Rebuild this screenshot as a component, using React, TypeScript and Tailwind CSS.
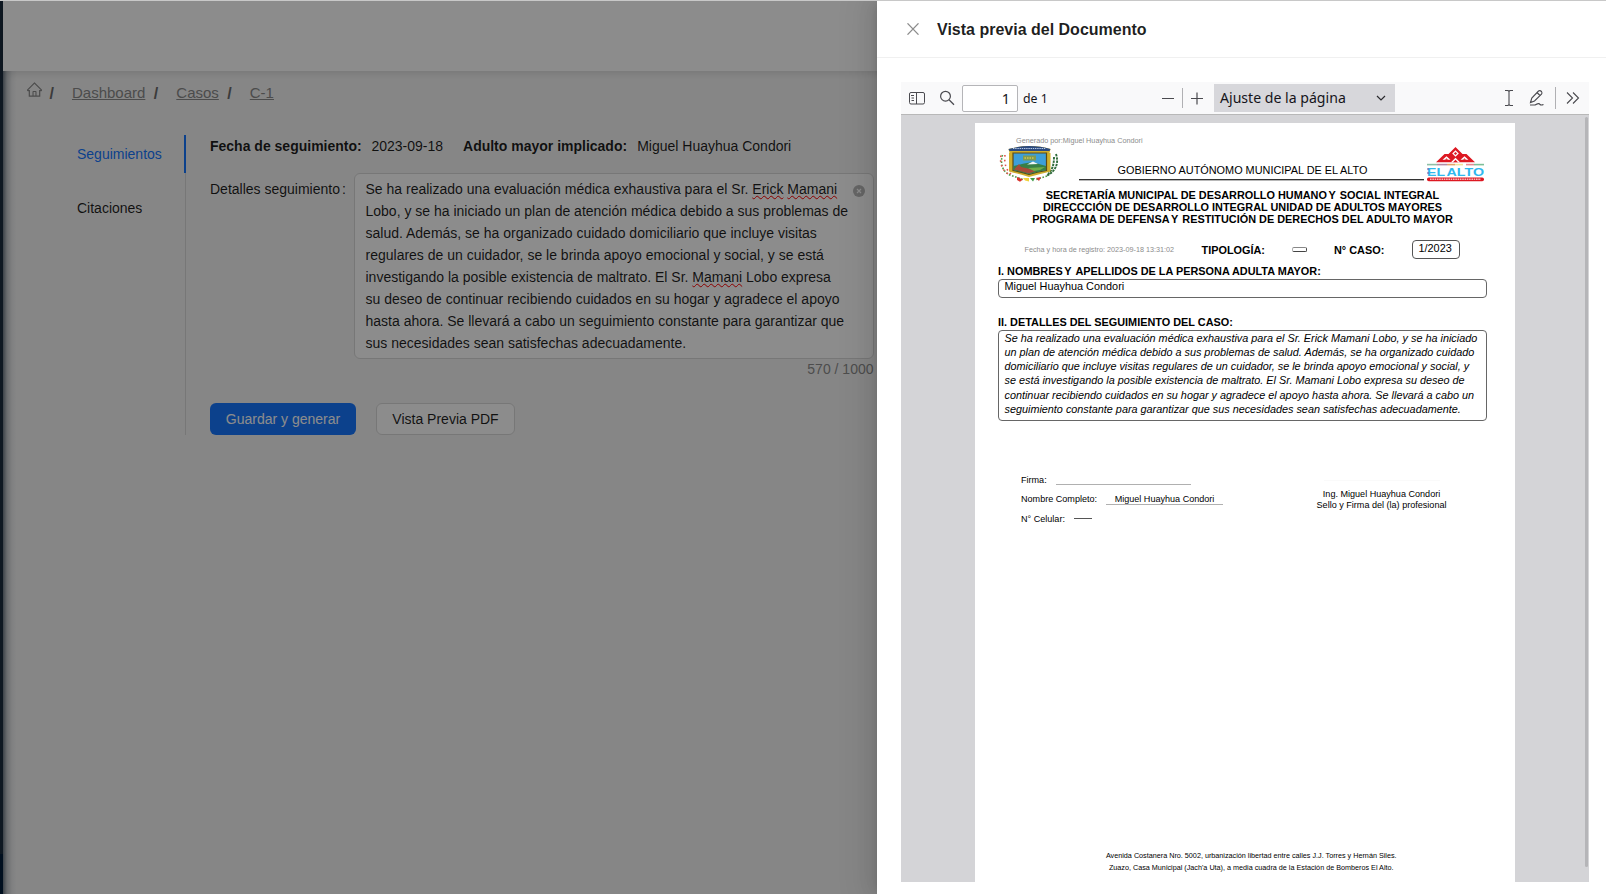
import React from 'react';

const details = [
  [['Se ha realizado una evaluación médica exhaustiva para el Sr. ', false], ['Erick', true], [' ', false], ['Mamani', true]],
  [['Lobo, y se ha iniciado un plan de atención médica debido a sus problemas de', false]],
  [['salud. Además, se ha organizado cuidado domiciliario que incluye visitas', false]],
  [['regulares de un cuidador, se le brinda apoyo emocional y social, y se está', false]],
  [['investigando la posible existencia de maltrato. El Sr. ', false], ['Mamani', true], [' Lobo expresa', false]],
  [['su deseo de continuar recibiendo cuidados en su hogar y agradece el apoyo', false]],
  [['hasta ahora. Se llevará a cabo un seguimiento constante para garantizar que', false]],
  [['sus necesidades sean satisfechas adecuadamente.', false]],
] as [string, boolean][][];

const pdfDetails = [
  'Se ha realizado una evaluación médica exhaustiva para el Sr. Erick Mamani Lobo, y se ha iniciado',
  'un plan de atención médica debido a sus problemas de salud. Además, se ha organizado cuidado',
  'domiciliario que incluye visitas regulares de un cuidador, se le brinda apoyo emocional y social, y',
  'se está investigando la posible existencia de maltrato. El Sr. Mamani Lobo expresa su deseo de',
  'continuar recibiendo cuidados en su hogar y agradece el apoyo hasta ahora. Se llevará a cabo un',
  'seguimiento constante para garantizar que sus necesidades sean satisfechas adecuadamente.',
];

function HomeIcon() {
  return (
    <svg viewBox="64 64 896 896" className="mt-[-7px] size-[15px] shrink-0" fill="currentColor">
      <path d="M946.5 505L560.1 118.8l-25.9-25.9a31.5 31.5 0 00-44.4 0L77.5 505a63.9 63.9 0 00-18.8 46c.4 35.2 29.7 63.3 64.9 63.3h42.5V940h691.8V614.3h43.4c17.1 0 33.2-6.7 45.3-18.8a63.6 63.6 0 0018.7-45.3c0-17-6.7-33.1-18.8-45.2zM568 868H456V664h112v204zm217.9-325.7V868H632V640c0-22.100-17.900-40-40-40H432c-22.100 0-40 17.900-40 40v228H238.100V542.300h-96l370-369.700 23.100 23.100L882 542.300h-96.100z" />
    </svg>
  );
}

function Crest() {
  return (
    <svg viewBox="0 0 60 36" className="h-[36px] w-[60px]">
      <g fill="none" stroke="#4f9a48" strokeWidth="1.600" strokeDasharray="1.600 1.600">
        <path d="M3.500 9C1 17 3 26 12 29.500L24 33.500" />
        <path d="M48 30L37 33.500" />
      </g>
      <g fill="none" stroke="#2f6b3a" strokeWidth="1.900" strokeDasharray="2.400 0.900">
        <path d="M57 8C60 17 57 25 48 29.500" />
        <path d="M55 11C55 18 53.500 24 49 28" />
      </g>
      <g fill="none" stroke="#e0554a" strokeWidth="1.600" strokeDasharray="1.600 3.200">
        <path d="M2 9.500C0.500 17 3 25 11 29" />
        <path d="M6 9C5 17 7 24 12 28" />
      </g>
      <path d="M18 31L24 33.500 21 35.800 18 34z" fill="#d8332b" />
      <path d="M24 32H30V35.500L26 34.500z" fill="#f0d13b" />
      <path d="M31 32H36L34 35.500z" fill="#3f9a46" />
      <path d="M37 32L42 31 40 35z" fill="#d8332b" />
      <path d="M9.500 3Q20 0 30 0Q42 0 51.500 3L50.500 7H51.500V25.500Q41 28 30 31Q20 28 10 25.500V7H10.500z" fill="#cfae2c" />
      <path d="M9.500 3Q20 0 30 0Q42 0 51.500 3L50.500 5H10.500z" fill="#2b4a80" />
      <path d="M14 2.500H47" stroke="#b9cbe4" strokeWidth="1.100" strokeDasharray="1.400 0.800" />
      <path d="M14 7H47.500V24.500Q38 26 30 28.500Q22 26 14 24.500z" fill="#3d9fd9" stroke="#5b4a18" strokeWidth="1.200" />
      <path d="M24 9.500H37V14.500H24z" fill="#7f9a52" />
      <path d="M25.500 12H35.500" stroke="#d8c84b" strokeWidth="1.500" strokeDasharray="1.500 1" />
      <path d="M14.500 20L25 17.500 34 16 40 18 47 20V24Q38 26 30 28Q22 26 14.500 24z" fill="#377f46" />
      <path d="M28 18.500L34 15.500 39 18z" fill="#eef6fb" />
      <path d="M15 23.500L20 18 22 21 29 22.500 37 25 30 27.500z" fill="#a84b39" />
      <path d="M29 22L46 21 41 24 35 25z" fill="#6fae4a" />
    </svg>
  );
}

function ElAltoLogo() {
  return (
    <svg viewBox="0 0 57 35" className="h-[35px] w-[57px]">
      <path d="M9 15.200L17.500 7H21.500L28.500 0 35.500 7H39.500L48 15.200z" fill="#dd1822" />
      <path d="M28.500 3.200l3.300 3.300-3.300 3.300-3.300-3.300z" fill="#fff" />
      <path d="M28.500 4.900l1.600 1.600-1.600 1.600-1.600-1.600z" fill="#dd1822" />
      <path d="M15.500 12.800L19.500 9.300 23.500 12.800zM33.500 12.800L37.500 9.300 41.500 12.800z" fill="#fff" />
      <path d="M18 12.800l1.500-1.600L21 12.800zM36 12.800l1.500-1.600L39 12.800z" fill="#dd1822" />
      <path d="M24 15.200L28.500 10.800 33 15.200z" fill="#fff" />
      <path d="M26 15.200L28.500 12.700 31 15.200z" fill="#dd1822" />
      <g strokeWidth="1.600">
        <path d="M0 17.600H10" stroke="#8fbfa6" />
        <path d="M10 17.600H20" stroke="#b58aa6" />
        <path d="M20 17.600H28" stroke="#e3a36b" />
        <path d="M28 17.600H36" stroke="#f1e39a" />
        <path d="M39 17.600H47" stroke="#e58a94" />
        <path d="M47 17.600H57" stroke="#7fbf98" />
      </g>
      <g fontSize="11.300" fontWeight="700" fill="#2fb8ee" className="font-['Liberation_Sans',sans-serif]">
        <text x="0" y="28.700" textLength="18" lengthAdjust="spacingAndGlyphs">EL</text>
        <text x="19.500" y="28.700" textLength="37.500" lengthAdjust="spacingAndGlyphs">ALTO</text>
      </g>
      <path d="M1 21v2M1 25v2" stroke="#6b4fa0" strokeWidth="1" />
      <rect x="0" y="30.400" width="57" height="3.800" rx="1.800" fill="#dd1822" />
      <path d="M3 32.300H54" stroke="#f6b7ba" strokeWidth="1.400" strokeDasharray="1.600 0.700" />
    </svg>
  );
}

function Background() {
  return (
    <div className="flex h-full w-full pt-px">
      <div className="flex w-[3px] shrink-0 flex-col">
        <div className="flex-1 bg-[#1b2c3e]" />
        <div className="h-10 bg-[#001d3a]" />
      </div>
      <div className="flex min-w-0 flex-1 flex-col">
        <div className="z-10 h-[70px] shrink-0 bg-white shadow-[0_2px_8px_rgba(0,0,0,0.12)]" />
        <main className="flex-1 bg-[#f5f5f5] bg-[linear-gradient(to_right,rgba(0,21,41,0.55)_0px,rgba(0,21,41,0.22)_4px,rgba(0,21,41,0.05)_9px,transparent_14px)]">
          <nav className="flex h-[44px] items-center pl-[23.500px] text-[15px] text-[#8a8a8a]">
            <HomeIcon />
            <b className="ml-[8px] mt-px text-[16px] text-[#6c6c6c]">/</b>
            <a className="ml-[18px] underline">Dashboard</a>
            <b className="ml-[8.500px] mt-px text-[16px] text-[#6c6c6c]">/</b>
            <a className="ml-[18px] underline">Casos</a>
            <b className="ml-[8.500px] mt-px text-[16px] text-[#6c6c6c]">/</b>
            <a className="ml-[18px] underline">C-1</a>
          </nav>
          <div className="mt-[20px] flex h-[300px]">
            <aside className="ml-[50px] flex w-[133px] flex-col gap-4 border-r border-[#d9d9d9]">
              <div className="mr-[-1px] flex h-[38px] items-center border-r-2 border-[#1677ff] pl-6 text-[#1677ff]">Seguimientos</div>
              <div className="flex h-[38px] items-center pl-6">Citaciones</div>
            </aside>
            <section className="ml-6 flex w-[664px] flex-col">
              <div className="flex h-[22px] items-center">
                <b>Fecha de seguimiento:</b>
                <span className="ml-[9.700px]">2023-09-18</span>
                <b className="ml-[20px]">Adulto mayor implicado:</b>
                <span className="ml-[10px]">Miguel Huayhua Condori</span>
              </div>
              <div className="mt-4 flex">
                <div className="flex h-8 w-[144px] shrink-0 items-center">Detalles seguimiento<span className="ml-[2px]">:</span></div>
                <div className="flex w-[520px] flex-col">
                  <div className="flex h-[186px] justify-between rounded-md border border-[#d9d9d9] bg-white py-1 pl-[10.500px] pr-2">
                    <div className="leading-[22px]">
                      {details.map((line, i) => (
                        <div key={i} className="whitespace-pre">
                          {line.map(([text, flagged], j) => (
                            <span key={j} className={flagged ? 'underline decoration-[#ff0000] decoration-wavy decoration-[1.400px] underline-offset-[1px] [text-decoration-skip-ink:none]' : ''}>{text}</span>
                          ))}
                        </div>
                      ))}
                    </div>
                    <svg viewBox="0 0 12 12" className="mt-[7px] size-[12px] shrink-0">
                      <circle cx="6" cy="6" r="6" fill="#b8b8b8" />
                      <path d="M4 4l4 4M8 4l-4 4" stroke="#fff" strokeWidth="1.200" />
                    </svg>
                  </div>
                  <div className="mt-[-1px] h-[23px] pr-[0.500px] text-right leading-[22px] text-[#8c8c8c]">570 / 1000</div>
                </div>
              </div>
              <div className="mt-[22px] flex gap-5">
                <button className="h-8 w-[146px] rounded-md bg-[#1677ff] text-white">Guardar y generar</button>
                <button className="h-8 w-[139px] rounded-md border border-[#d9d9d9] bg-white">Vista Previa PDF</button>
              </div>
            </section>
          </div>
        </main>
      </div>
    </div>
  );
}

function Toolbar() {
  return (
    <div className="flex h-[33px] shrink-0 items-center border-b border-[#b8b8b8] bg-[#f9f9fa] font-['Noto_Sans',sans-serif] text-[#15141a]">
      <svg viewBox="0 0 16 16" className="ml-2 size-4" fill="none" stroke="#4a4a4f">
        <rect x="0.500" y="2.500" width="15" height="11.500" rx="1.500" />
        <path d="M7.500 2.500V14M2 5.500h3M2.500 8h2.500M2.500 10.500h2.500" />
      </svg>
      <svg viewBox="0 0 16 16" className="ml-[14px] size-4" fill="none" stroke="#4a4a4f" strokeWidth="1.200">
        <circle cx="6.500" cy="6.200" r="4.900" />
        <path d="M10 9.800L15 14.700" />
      </svg>
      <div className="ml-[7px] flex h-[27px] w-[56px] items-center justify-end rounded-[2px] border border-[#b5b5b8] bg-white pr-[7px] text-[14.500px]">1</div>
      <span className="ml-[5px] w-[60px] whitespace-nowrap pt-px text-[12.300px]">de 1</span>
      <svg viewBox="0 0 42 20" className="ml-[78.500px] h-5 w-[42px]" fill="none" stroke="#4a4a4f" strokeWidth="1.200">
        <path d="M0 10.500H12M29 10.500H41M35 4.500V16.500" />
        <path d="M20.500 0V20" stroke="#b0b0b3" strokeWidth="1" />
      </svg>
      <div className="ml-[10.500px] flex h-7 w-[181px] items-center justify-between bg-[#d7d7db] pl-[6px] pr-[9px] text-[14.100px]">
        <span className="whitespace-nowrap">Ajuste de la página</span>
        <svg viewBox="0 0 10 6" className="h-[6px] w-[10px]" fill="none" stroke="#2a2a2e" strokeWidth="1.200"><path d="M1 1l4 4 4-4" /></svg>
      </div>
      <svg viewBox="0 0 80 24" className="ml-[107px] h-6 w-[80px]" fill="none" stroke="#4a4a4f" strokeWidth="1.100">
        <path d="M3 4.500H6L7 5.500 8 4.500H11M3 19.500H6L7 18.500 8 19.500H11M7 5.500V18.500" />
        <path d="M28.500 16.500L29.800 12 36.500 5Q38 4 39.500 5.500 40.500 7 39.500 8.200L32.500 15zM35 6.500L38 9.500M28 19H33Q37 16.500 38 18.500 39 19.500 41.500 18.500" />
        <path d="M53.500 1V23" stroke="#b0b0b3" strokeWidth="1" />
        <path d="M65 6.500L70.500 12 65 17.500M71 6.500L76.500 12 71 17.500" />
      </svg>
    </div>
  );
}

function PdfPage() {
  return (
    <div className="mt-2 flex h-[759px] w-[540px] shrink-0 flex-col bg-white pl-[23px] pr-[28px] text-[10.890px] text-black">
      <div className="mt-[12px] h-[11px] pl-[18px] text-[7.260px] leading-[11px] text-[#8c8c8c]">Generado por:Miguel Huayhua Condori</div>
      <div className="flex h-[36px]">
        <div className="w-[81px] pl-px"><Crest /></div>
        <div className="mt-[17px] h-[17px] w-[345px] border-b border-[#333] text-center leading-[14px] shadow-[0_1px_0_#b8b8b8]">
          <span className="relative left-[-9px]">GOBIERNO AUTÓNOMO MUNICIPAL DE EL ALTO</span>
        </div>
        <div className="ml-[3px] pt-[0.500px]"><ElAltoLogo /></div>
      </div>
      <div className="mt-[7px] text-center font-bold leading-[12px]">
        <p>SECRETARÍA MUNICIPAL DE DESARROLLO HUMANO<span className="[word-spacing:-1.500px]"> </span>Y<span className="[word-spacing:1px]"> </span>SOCIAL INTEGRAL</p>
        <p>DIRECCCIÓN DE DESARROLLO INTEGRAL UNIDAD DE ADULTOS MAYORES</p>
        <p>PROGRAMA DE DEFENSA<span className="[word-spacing:-1.500px]"> </span>Y<span className="[word-spacing:1px]"> </span>RESTITUCIÓN DE DERECHOS DEL ADULTO MAYOR</p>
      </div>
      <div className="mt-[15px] flex h-[19px] items-center pl-[26.500px] font-bold">
        <span className="w-[177px] text-[7.240px] font-normal text-[#8c8c8c]">Fecha y hora de registro: 2023-09-18 13:31:02</span>
        <span className="w-[90px]">TIPOLOGÍA:</span>
        <span className="h-[5px] w-[15px] rounded-[2px] border border-b-[#444] border-l-[#aaa] border-r-[#444] border-t-[#888]" />
        <span className="ml-[27.500px] w-[77.500px]">N° CASO:</span>
        <span className="h-[19px] w-[48px] rounded-[4px] border border-[#555] pl-[6px] font-normal leading-[15px]">1/2023</span>
      </div>
      <h3 className="mt-[5px] h-[15px] font-bold leading-[15px]">I. NOMBRES<span className="[word-spacing:-1.500px]"> </span>Y<span className="[word-spacing:1px]"> </span>APELLIDOS DE LA PERSONA ADULTA MAYOR:</h3>
      <div className="h-[19px] rounded-[4px] border border-[#666] pl-[5.500px] leading-[13px]">Miguel Huayhua Condori</div>
      <h3 className="mt-[17px] h-[15px] font-bold leading-[15px]">II. DETALLES DEL SEGUIMIENTO DEL CASO:</h3>
      <div className="h-[91px] rounded-[4px] border border-[#666] pl-[5.500px] text-[10.840px] italic leading-[14.150px]">
        {pdfDetails.map((line) => <div key={line} className="whitespace-nowrap">{line}</div>)}
      </div>
      <div className="mt-[52px] flex justify-between pl-[23px] pr-[40.500px] text-[9.076px]">
        <div className="flex flex-col">
          <div className="flex h-[14px]"><span className="w-[35px] leading-[14px]">Firma:</span><span className="h-[12px] w-[135px] border-b border-[#b0b0b0]" /></div>
          <div className="mt-[6px] flex h-[12px] leading-[12px]"><span className="w-[85px]">Nombre Completo:</span><span className="w-[117px] border-b border-[#b0b0b0] text-center">Miguel Huayhua Condori</span></div>
          <div className="mt-[8px] flex h-[14px] leading-[13px]"><span className="w-[53px]">N° Celular:</span><span className="h-[6px] w-[18px] border-b border-[#555]" /></div>
        </div>
        <div className="text-center leading-[11px]">
          <div className="mx-auto mb-[8px] mt-[7px] h-px w-[116px] bg-[#fafafa]" />
          <p>Ing. Miguel Huayhua Condori</p>
          <p>Sello y Firma del (la) profesional</p>
        </div>
      </div>
      <footer className="mb-[8px] mt-auto pl-[17.500px] text-center text-[7.230px] leading-[12px]">
        <p>Avenida Costanera Nro. 5002, urbanización libertad entre calles J.J. Torres y Hernán Siles.</p>
        <p>Zuazo, Casa Municipal (Jach'a Uta), a media cuadra de la Estación de Bomberos El Alto.</p>
      </footer>
    </div>
  );
}

export default function App() {
  return (
    <div className="relative h-[894px] w-[1606px] overflow-hidden bg-white font-['Liberation_Sans',sans-serif] text-[14px] leading-[22px] text-[rgba(0,0,0,0.88)]">
      <Background />
      <div className="absolute inset-0 z-20 bg-black/45" />
      <div className="absolute bottom-0 right-0 top-0 z-30 flex w-[729px] flex-col bg-white pt-px shadow-[-6px_0_16px_0_rgba(0,0,0,0.08),-3px_0_6px_-4px_rgba(0,0,0,0.12),-9px_0_28px_8px_rgba(0,0,0,0.05)]">
        <header className="flex h-[57px] shrink-0 items-center border-b border-[#f0f0f0] pl-[30px]">
          <svg viewBox="0 0 12 12" className="size-3" fill="none" stroke="#8c8c8c" strokeWidth="1.200"><path d="M0.500 0.300L11.500 11.700M11.500 0.300L0.500 11.700" /></svg>
          <h1 className="ml-[18px] pt-[2px] text-[16px] font-bold">Vista previa del Documento</h1>
        </header>
        <div className="mx-6 mt-6 flex h-[800px] w-[688px] flex-col">
          <Toolbar />
          <div className="flex flex-1 justify-between bg-[#d4d4d7] pl-[74px]">
            <PdfPage />
            <div className="mr-px mt-[2px] h-[750px] w-[3px] rounded bg-[#b5b5b8]" />
          </div>
        </div>
      </div>
      <div className="absolute left-0 right-0 top-0 z-40 h-px bg-[#c8c8c8]" />
    </div>
  );
}
